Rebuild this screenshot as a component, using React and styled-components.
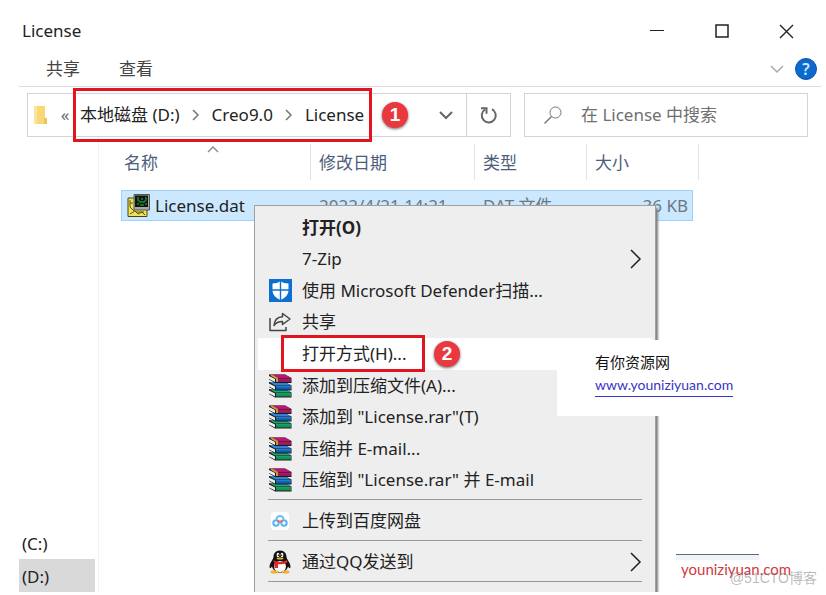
import { useState } from "react";
import styled, { createGlobalStyle, css } from "styled-components";

const GlobalStyles = createGlobalStyle`
  * {
    box-sizing: border-box;
  }
  body {
    margin: 0;
    background: #fff;
    color: #222;
    font-family: "Noto Sans", "Noto Sans CJK SC", sans-serif;
    font-size: 17px;
    line-height: 24px;
  }
  button,
  input {
    padding: 0;
    border: none;
    background: none;
    color: inherit;
    font: inherit;
  }
  svg {
    display: block;
    flex-shrink: 0;
  }
`;

const Window = styled.div`
  min-height: 100vh;
  display: flex;
  flex-direction: column;
  padding: 0 5px 3px 19px;
  overflow: hidden;
`;

const TitleBar = styled.header`
  display: flex;
  align-items: center;
  height: 52px;
  padding: 10px 2px 0 3px;
`;

const Title = styled.h1`
  flex: 1;
  margin: 0;
  font-size: 17px;
  font-weight: normal;
`;

const WindowButton = styled.button`
  display: flex;
  justify-content: center;
  align-items: center;
  width: 65px;
  height: 32px;
  color: #222;
`;

const Ribbon = styled.div`
  display: flex;
  align-items: center;
  gap: 39px;
  height: 35px;
  padding: 0 4px 0 27px;
  border-bottom: 1px solid #dcdcdc;
`;

const RibbonTab = styled.button`
  color: #444;
`;

const RibbonTools = styled.div`
  display: flex;
  align-items: center;
  gap: 11px;
  margin-left: auto;
  color: #aaa;
`;

const HelpButton = styled.button`
  width: 22px;
  height: 22px;
  border: 1px solid #0a55a8;
  border-radius: 50%;
  background: #0a6ad0;
  color: #d8e9fb;
  font-size: 16px;
  font-weight: 600;
  line-height: 20px;
`;

const Toolbar = styled.div`
  display: flex;
  gap: 13px;
  padding: 6px 13px 0 8px;
`;

const AddressBar = styled.div`
  flex: 1;
  display: flex;
  align-items: center;
  height: 44px;
  padding-left: 5px;
  border: 1px solid #d4d4d4;
`;

const Overflow = styled.button`
  width: 12px;
  margin-left: 11px;
  color: #666;
`;

const Breadcrumbs = styled.nav`
  position: relative;
  display: flex;
  align-items: center;
  gap: 12px;
  margin-left: 9px;
  color: #777;
`;

const Crumb = styled.button`
  color: #222;
  white-space: nowrap;
`;

const AddressButton = styled.button`
  display: flex;
  justify-content: center;
  align-items: center;
  align-self: stretch;
  width: ${(props) => (props.$divided ? "44px" : "40px")};
  margin-left: ${(props) => (props.$divided ? "0" : "auto")};
  border-left: ${(props) => (props.$divided ? "1px solid #d4d4d4" : "none")};
  color: #666;
`;

const SearchBox = styled.label`
  display: flex;
  align-items: center;
  gap: 18px;
  width: 284px;
  height: 44px;
  padding-left: 18px;
  border: 1px solid #d4d4d4;
  color: #777;
`;

const SearchInput = styled.input`
  flex: 1;
  min-width: 0;
  outline: none;
  &::placeholder {
    color: #707070;
    opacity: 1;
  }
`;

const RedFrame = styled.span`
  position: absolute;
  border: 3px solid #e3131f;
  pointer-events: none;
  ${(props) =>
    props.$at === "path"
      ? css`
          inset: -15px -8px -15px -7px;
        `
      : css`
          inset: -3px auto -2px 23px;
          width: 144px;
        `}
`;

const StepBadge = styled.span`
  position: absolute;
  top: 50%;
  left: ${(props) => (props.$at === "path" ? "302px" : "176px")};
  width: 26px;
  height: 26px;
  margin-top: -13px;
  border-radius: 50%;
  background: #e9393f;
  box-shadow: 0 1px 3px rgba(0, 0, 0, 0.6);
  color: #fff;
  font-family: "Liberation Sans", sans-serif;
  font-size: 19px;
  font-weight: bold;
  line-height: 26px;
  text-align: center;
`;

const Main = styled.main`
  flex: 1;
  display: flex;
`;

const Sidebar = styled.aside`
  display: flex;
  flex-direction: column;
  justify-content: flex-end;
  width: 80px;
  padding-right: 3px;
  border-right: 1px solid #f1f1f1;
`;

const Drive = styled.button`
  height: 33px;
  padding: 2px 0 0 3px;
  background: ${(props) => (props.$active ? "#d9d9d9" : "transparent")};
  text-align: left;
`;

const FilePane = styled.section`
  position: relative;
  flex: 1;
  min-height: 455px;
`;

const FileTable = styled.table`
  width: 578px;
  margin: 7px 0 0 22px;
  table-layout: fixed;
  border-collapse: separate;
  border-spacing: 0;
`;

const HeadCell = styled.th`
  position: relative;
  width: ${(props) => props.$width}px;
  height: 36px;
  padding: 2px 0 0 ${(props) => (props.$sorted ? "3px" : "8px")};
  border-right: 1px solid #e2e2e2;
  color: #4c607a;
  font-weight: normal;
  text-align: left;
  svg {
    position: absolute;
    top: 2px;
    left: 86px;
    color: #888;
  }
`;

const FileCell = styled.td`
  padding: 10px 0 0;
`;

const CellBody = styled.div`
  display: flex;
  align-items: center;
  gap: 5px;
  height: 31px;
  padding-left: 8px;
  border: solid #99d1ff;
  border-width: 1px 0;
  background: #cce8ff;
  color: #6d7780;
  white-space: nowrap;
  ${(props) =>
    props.$first &&
    css`
      padding-left: 5px;
      border-left-width: 1px;
      color: #222;
    `}
  ${(props) =>
    props.$last &&
    css`
      justify-content: flex-end;
      margin-right: 6px;
      padding-right: 4px;
      border-right-width: 1px;
    `}
`;

const ContextMenu = styled.div`
  position: absolute;
  top: 68px;
  bottom: 0;
  left: 155px;
  width: 402px;
  padding: 6px 3px 0;
  border: solid #a0a0a0;
  border-width: 1px 1px 0;
  background: #eee;
  box-shadow: 2px 3px 2px #808080;
  clip-path: inset(0 -5px 0 0);
`;

const MenuGroup = styled.div`
  display: grid;
  grid-auto-rows: 1fr;
  height: ${(props) => props.$height}px;
`;

const MenuDivider = styled.hr`
  height: 1px;
  margin: 3px 10px 5px;
  border: none;
  background: #999;
`;

const MenuButton = styled.button`
  position: relative;
  display: flex;
  align-items: center;
  gap: 10px;
  padding: 0 10px;
  background: ${(props) => (props.$active ? "#fff" : "transparent")};
  font-weight: ${(props) => (props.$bold ? "bold" : "normal")};
  text-align: left;
`;

const IconSlot = styled.span`
  display: flex;
  justify-content: center;
  width: 24px;
`;

const MenuLabel = styled.span`
  flex: 1;
  white-space: nowrap;
`;

const SiteCard = styled.div`
  position: absolute;
  top: 203px;
  left: 458px;
  width: 220px;
  height: 76px;
  padding: 10px 0 0 38px;
  background: #fff;
  color: #111;
  font-family: Lato, "Noto Sans CJK SC", sans-serif;
  font-size: 15px;
`;

const SiteLink = styled.a`
  display: table;
  border-bottom: 1px solid #3a35c4;
  color: #3a35c4;
  font-size: 14px;
  line-height: 22px;
  text-decoration: none;
`;

const CornerMark = styled.div`
  position: absolute;
  right: 22px;
  bottom: 11px;
  width: 123px;
  padding: 3px 0 0 5px;
  color: #cf3a42;
  font-family: Lato, sans-serif;
  font-size: 15px;
  &::before {
    content: "";
    position: absolute;
    top: 0;
    left: 0;
    width: 83px;
    height: 5px;
    border-top: 1px solid #667;
    background: #eef3f7;
  }
`;

const BlogMark = styled.div`
  position: absolute;
  right: 4px;
  bottom: 2px;
  color: rgba(120, 120, 120, 0.5);
  font-family: "Liberation Sans", "Noto Sans CJK SC", sans-serif;
  font-size: 14px;
  white-space: nowrap;
`;

const Chevron = ({ d, width, height, stroke = 1 }) => (
  <svg
    width={width}
    height={height}
    fill="none"
    stroke="currentColor"
    strokeWidth={stroke}
  >
    <path d={d} />
  </svg>
);

const FolderIcon = () => (
  <svg width="15" height="20" viewBox="0 0 15 20">
    <path d="M1 1h11v13h2v5H1z" fill="#f8d775" />
    <path d="M1 1h3v18H1z" fill="#fbe59a" />
    <path d="M11 13h3v6h-3z" fill="#eec45a" />
  </svg>
);

const RefreshIcon = () => (
  <svg width="18" height="18" fill="none" stroke="currentColor" strokeWidth="2">
    <path d="M12 3.2a7 7 0 1 1-7 .3" />
    <path d="M1 2.2h5.5v5.5" />
  </svg>
);

const SearchIcon = () => (
  <svg width="20" height="20" fill="none" stroke="currentColor">
    <circle cx="12.5" cy="7.5" r="5.5" />
    <path d="M8.5 11.5L1.5 18.5" strokeWidth="1.4" />
  </svg>
);

const DatIcon = () => (
  <svg width="23" height="24" viewBox="0 0 23 24">
    <path d="M1 4h19v18.500H1z" fill="#ece35c" stroke="#4a4512" />
    <path
      d="M3 6v7M3 9h3M3 13l4 4M3 20l5-3 3 3 4-2 3 3M9 18h8"
      fill="none"
      stroke="#5b5415"
    />
    <path d="M7 .5h15.500V16H7z" fill="#a9a9a9" stroke="#555" />
    <path d="M8 1.500h13V13H8z" fill="#101410" />
    <path
      d="M11 3v3l2 2h4l2-2V3M11 11V9M13 11h4M19 11V9M14 5h2"
      fill="none"
      stroke="#1d8a2e"
      strokeWidth="1.500"
    />
  </svg>
);

const ShieldIcon = () => (
  <svg width="23" height="23" viewBox="0 0 23 23">
    <path d="M0 0h23v23H0z" fill="#0f6fd1" />
    <path
      d="M11.5 2c2.400 2 5 2.400 8 2.500V11c0 5-3.500 8-8 10-4.500-2-8-5-8-10V4.500c3-.1 5.600-.5 8-2.500z"
      fill="#fff"
    />
    <path d="M11.5 1v21M3 11h17" stroke="#0f6fd1" strokeWidth="1.400" />
  </svg>
);

const ShareIcon = () => (
  <svg
    width="23"
    height="20"
    fill="none"
    stroke="#444"
    strokeWidth="1.500"
    strokeLinejoin="round"
  >
    <path d="M1 6v12.500h16V15" />
    <path d="M13.500 1.500l7.500 5.500-7.500 5.500V9.500c-4 0-6.500 1-8.500 4C5.500 8 8.500 5 13.500 4.800z" />
  </svg>
);

const Book = ({ y, cover, spine }) => (
  <g transform={`translate(0 ${y})`}>
    <path d="M1 0h16l6.500 3.500v5H7L1 5z" fill="#1c1c1c" />
    <path d="M1.500 0H17l6 3.500H7z" fill={cover} />
    <path d="M8 4.200h15v3.300H8z" fill={spine} />
    <path d="M8 4.200h15v1H8z" fill={cover} />
    <path d="M1 1.500l6 3v3L1 4.500z" fill="#efece8" />
  </g>
);

const RarIcon = () => (
  <svg width="24" height="24" viewBox="0 0 24 24">
    <Book y={15} cover="#1fa873" spine="#12905a" />
    <Book y={8} cover="#2c86d6" spine="#0f5cb5" />
    <Book y={0.5} cover="#b31a70" spine="#a3145f" />
    <path d="M3 1l6 3.500V8" fill="none" stroke="#c99a35" strokeWidth="2" />
  </svg>
);

const CloudIcon = () => (
  <svg width="18" height="18" viewBox="0 0 18 18">
    <rect width="18" height="18" rx="3" fill="#fff" />
    <g fill="none" strokeWidth="2">
      <circle cx="5" cy="11" r="2.700" stroke="#55b5f2" />
      <circle cx="13" cy="11" r="2.700" stroke="#55b5f2" />
      <path d="M5.500 7.500a3.500 3.500 0 1 1 7 0" stroke="#62c4ef" />
      <path d="M6 8.500l3 1.500 3-1.500" stroke="#ef6b83" />
    </g>
  </svg>
);

const PenguinIcon = () => (
  <svg width="22" height="24" viewBox="0 0 22 24">
    <path
      d="M11 .5C6.500.5 4.500 3.500 4.500 7 4.500 9 .5 13 .5 17c0 1.500 1 1.500 2.500-.5C4 20 7 22.500 11 22.500s7-2.500 8-6c1.500 2 2.500 2 2.500.5 0-4-4-8-4-10 0-3.500-2-6.500-6.500-6.500z"
      fill="#111"
    />
    <ellipse cx="11" cy="16.500" rx="6" ry="5.500" fill="#fff" />
    <ellipse cx="9" cy="5" rx="1.400" ry="2.200" fill="#fff" />
    <ellipse cx="13" cy="5" rx="1.400" ry="2.200" fill="#fff" />
    <circle cx="9.400" cy="5.200" r=".7" />
    <circle cx="12.600" cy="5.200" r=".7" />
    <ellipse cx="11" cy="8.500" rx="3.500" ry="1.100" fill="#e8b62c" />
    <path d="M4 10c4.500 2.500 9.500 2.500 14 0l.5 2.500c-3.500 1.800-6.500 2-9.500 1.700V18H5.500v-4.800z" fill="#e02a23" />
    <ellipse cx="5.500" cy="22" rx="4" ry="1.700" fill="#f0b13a" />
    <ellipse cx="16.500" cy="22" rx="4" ry="1.700" fill="#f0b13a" />
  </svg>
);

const menuGroups = [
  {
    height: 284,
    items: [
      { label: "打开(O)", bold: true },
      { label: "7-Zip", submenu: true },
      { label: "使用 Microsoft Defender扫描...", icon: <ShieldIcon /> },
      { label: "共享", icon: <ShareIcon /> },
      { label: "打开方式(H)...", step: 2 },
      { label: "添加到压缩文件(A)...", icon: <RarIcon /> },
      { label: '添加到 "License.rar"(T)', icon: <RarIcon /> },
      { label: "压缩并 E-mail...", icon: <RarIcon /> },
      { label: '压缩到 "License.rar" 并 E-mail', icon: <RarIcon /> },
    ],
  },
  { height: 32, items: [{ label: "上传到百度网盘", icon: <CloudIcon /> }] },
  {
    height: 32,
    items: [{ label: "通过QQ发送到", icon: <PenguinIcon />, submenu: true }],
  },
];

const MenuItem = ({ label, icon, bold, submenu, step }) => (
  <MenuButton type="button" role="menuitem" $bold={bold} $active={!!step}>
    <IconSlot>{icon}</IconSlot>
    <MenuLabel>{label}</MenuLabel>
    {submenu && (
      <Chevron d="M1 1l9 9-9 9" width={12} height={20} stroke={1.5} />
    )}
    {step && <RedFrame />}
    {step && <StepBadge>{step}</StepBadge>}
  </MenuButton>
);

const App = () => {
  const [keyword, setKeyword] = useState("");

  return (
    <Window>
      <GlobalStyles />
      <TitleBar>
        <Title>License</Title>
        <WindowButton type="button" aria-label="最小化">
          <Chevron d="M0 7.500h14" width={14} height={16} />
        </WindowButton>
        <WindowButton type="button" aria-label="最大化">
          <Chevron d="M1 2h12v12H1z" width={14} height={16} stroke={1.5} />
        </WindowButton>
        <WindowButton type="button" aria-label="关闭">
          <Chevron d="M1 1l13 13M14 1L1 14" width={15} height={15} stroke={1.4} />
        </WindowButton>
      </TitleBar>
      <Ribbon>
        <RibbonTab type="button">共享</RibbonTab>
        <RibbonTab type="button">查看</RibbonTab>
        <RibbonTools>
          <Chevron d="M1 1l6 6 6-6" width={14} height={9} stroke={1.5} />
          <HelpButton type="button">?</HelpButton>
        </RibbonTools>
      </Ribbon>
      <Toolbar>
        <AddressBar>
          <FolderIcon />
          <Overflow type="button">«</Overflow>
          <Breadcrumbs>
            <Crumb type="button">本地磁盘 (D:)</Crumb>
            <Chevron d="M1 1l5 5-5 5" width={8} height={12} stroke={1.5} />
            <Crumb type="button">Creo9.0</Crumb>
            <Chevron d="M1 1l5 5-5 5" width={8} height={12} stroke={1.5} />
            <Crumb type="button">License</Crumb>
            <RedFrame $at="path" />
            <StepBadge $at="path">1</StepBadge>
          </Breadcrumbs>
          <AddressButton type="button" aria-label="历史记录">
            <Chevron d="M1 1l6 6 6-6" width={14} height={9} stroke={2} />
          </AddressButton>
          <AddressButton type="button" aria-label="刷新" $divided>
            <RefreshIcon />
          </AddressButton>
        </AddressBar>
        <SearchBox htmlFor="search">
          <SearchIcon />
          <SearchInput
            id="search"
            type="text"
            placeholder="在 License 中搜索"
            value={keyword}
            onChange={(e) => setKeyword(e.target.value)}
          />
        </SearchBox>
      </Toolbar>
      <Main>
        <Sidebar>
          <Drive type="button">(C:)</Drive>
          <Drive type="button" $active>
            (D:)
          </Drive>
        </Sidebar>
        <FilePane>
          <FileTable>
            <thead>
              <tr>
                <HeadCell $width={190} $sorted>
                  名称
                  <Chevron d="M1 6l5-5 5 5" width={12} height={7} stroke={1.3} />
                </HeadCell>
                <HeadCell $width={164}>修改日期</HeadCell>
                <HeadCell $width={112}>类型</HeadCell>
                <HeadCell $width={112}>大小</HeadCell>
              </tr>
            </thead>
            <tbody>
              <tr>
                <FileCell>
                  <CellBody $first>
                    <DatIcon />
                    License.dat
                  </CellBody>
                </FileCell>
                <FileCell>
                  <CellBody>2022/4/21 14:21</CellBody>
                </FileCell>
                <FileCell>
                  <CellBody>DAT 文件</CellBody>
                </FileCell>
                <FileCell>
                  <CellBody $last>36 KB</CellBody>
                </FileCell>
              </tr>
            </tbody>
          </FileTable>
          <ContextMenu role="menu">
            {menuGroups.map((group) => (
              <div key={group.items[0].label}>
                <MenuGroup $height={group.height}>
                  {group.items.map((item) => (
                    <MenuItem key={item.label} {...item} />
                  ))}
                </MenuGroup>
                <MenuDivider />
              </div>
            ))}
          </ContextMenu>
          <SiteCard>
            有你资源网
            <SiteLink href="#site">www.youniziyuan.com</SiteLink>
          </SiteCard>
          <CornerMark>youniziyuan.com</CornerMark>
          <BlogMark>@51CTO博客</BlogMark>
        </FilePane>
      </Main>
    </Window>
  );
};

export default App;
